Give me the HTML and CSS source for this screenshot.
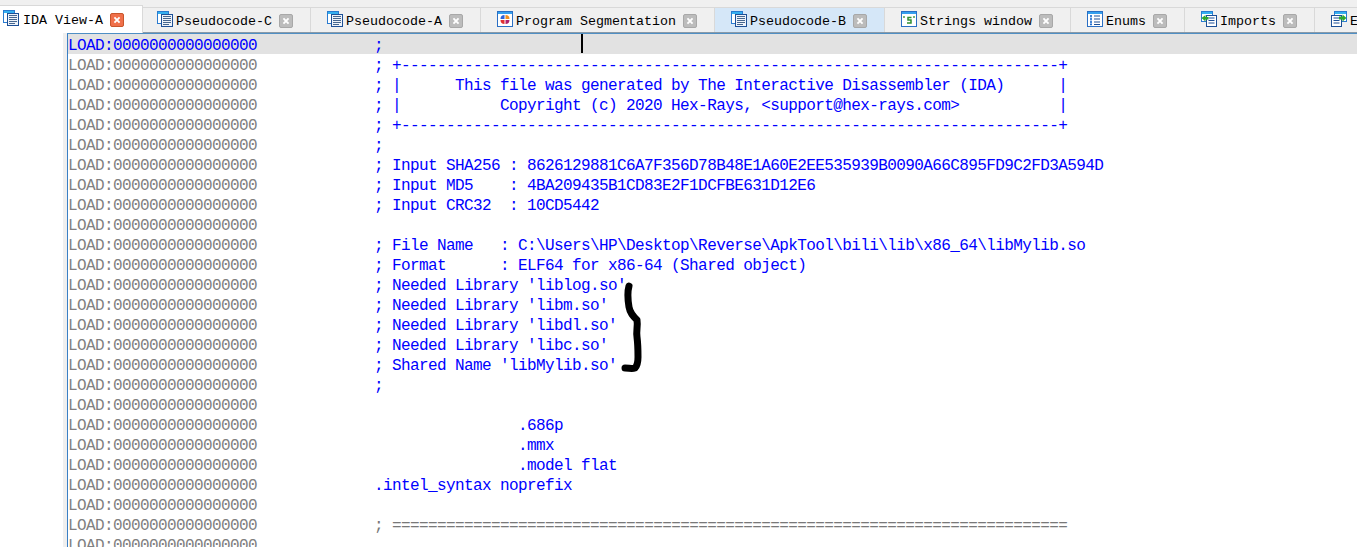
FILE: index.html
```html
<!DOCTYPE html>
<html lang="en">
<head>
<meta charset="utf-8">
<title>IDA View-A</title>
<link rel="stylesheet" href="styles.css">
</head>
<body>
<svg class="defs" width="0" height="0" aria-hidden="true">
  <symbol id="i-doc" viewBox="0 0 16 16">
    <rect x="0.500" y="0.500" width="11" height="12" fill="#fff" stroke="#2a7bd0"/>
    <rect x="1" y="1" width="10" height="2" fill="#35b0f0"/>
    <rect x="4.500" y="3.500" width="11" height="12" fill="#eef3fa" stroke="#1c4f96"/>
    <path d="M6 5.500h8M6 7.500h8M6 9.500h8M6 11.500h8M6 13.500h6" stroke="#46668e" stroke-width="1" fill="none"/>
  </symbol>
  <symbol id="i-seg" viewBox="0 0 16 16">
    <rect x="0.500" y="0.500" width="15" height="15" fill="#fff" stroke="#2a6fc4"/>
    <rect x="1" y="1" width="14" height="2" fill="#35a0ee"/>
    <path d="M7.500 8V4a4 4 0 0 0-4 4z" fill="#2f62d8"/>
    <path d="M8.500 8V4a4 4 0 0 1 4 4z" fill="#f09020"/>
    <path d="M7.500 9v4a4 4 0 0 1-4-4z" fill="#e03030"/>
    <path d="M8.500 9v4a4 4 0 0 0 4-4z" fill="#b0206a"/>
  </symbol>
  <symbol id="i-str" viewBox="0 0 16 16">
    <rect x="0.500" y="0.500" width="15" height="15" fill="#fff" stroke="#2a6fc4"/>
    <rect x="1" y="1" width="14" height="2" fill="#35a0ee"/>
    <path d="M10.500 6.500H7v2.500h3v3H6" fill="none" stroke="#2f8f2f" stroke-width="1.500"/>
    <path d="M3 5v2M13 5v2" stroke="#2f8f2f" stroke-width="1.300"/>
  </symbol>
  <symbol id="i-enum" viewBox="0 0 16 16">
    <rect x="0.500" y="0.500" width="15" height="15" fill="#fff" stroke="#2a6fc4"/>
    <rect x="1" y="1" width="14" height="2" fill="#35a0ee"/>
    <path d="M3 5h2M3 8h2M3 11h2M3 13.500h2" stroke="#1f6fd0" stroke-width="1.500"/>
    <path d="M4 4v10" stroke="#1f6fd0" stroke-width=".7"/>
    <path d="M7 5h6M7 8h6M7 11h6M7 13.500h6" stroke="#1c4f96"/>
  </symbol>
  <symbol id="i-imp" viewBox="0 0 16 16">
    <rect x="0.500" y="0.500" width="11" height="10" fill="#fff" stroke="#2a7bd0"/>
    <rect x="1" y="1" width="10" height="2" fill="#35b0f0"/>
    <rect x="5.500" y="4.500" width="10" height="11" fill="#fff" stroke="#1c4f96"/>
    <path d="M7.500 7h6M7.500 9.500h6M7.500 12h6" stroke="#1c4f96"/>
    <path d="M0.500 7l4-3v2h3v2.500h-3v2z" fill="#2fa82f"/>
  </symbol>
  <symbol id="i-exp" viewBox="0 0 16 16">
    <rect x="3.500" y="0.500" width="12" height="10" fill="#fff" stroke="#2a7bd0"/>
    <rect x="4" y="1" width="11" height="2" fill="#35b0f0"/>
    <rect x="0.500" y="4.500" width="10" height="11" fill="#fff" stroke="#1c4f96"/>
    <path d="M2.500 7h6M2.500 9.500h6M2.500 12h6" stroke="#1c4f96"/>
    <path d="M15.500 7l-4-3.500v2H8v3h3.500v2z" fill="#2fa82f"/>
  </symbol>
  <symbol id="i-x" viewBox="0 0 14 14">
    <path d="M4 4l6 6M10 4l-6 6" stroke="#fff" stroke-width="2.200"/>
  </symbol>
</svg>

<nav class="tabbar">
  <div class="tab active"><svg class="icon"><use href="#i-doc"/></svg><span class="label">IDA View-A</span><span class="close"><svg><use href="#i-x"/></svg></span></div>
  <div class="tab after-active"><svg class="icon"><use href="#i-doc"/></svg><span class="label">Pseudocode-C</span><span class="close"><svg><use href="#i-x"/></svg></span></div>
  <div class="tab"><svg class="icon"><use href="#i-doc"/></svg><span class="label">Pseudocode-A</span><span class="close"><svg><use href="#i-x"/></svg></span></div>
  <div class="tab"><svg class="icon"><use href="#i-seg"/></svg><span class="label">Program Segmentation</span><span class="close"><svg><use href="#i-x"/></svg></span></div>
  <div class="tab hover"><svg class="icon"><use href="#i-doc"/></svg><span class="label">Pseudocode-B</span><span class="close"><svg><use href="#i-x"/></svg></span></div>
  <div class="tab"><svg class="icon"><use href="#i-str"/></svg><span class="label">Strings window</span><span class="close"><svg><use href="#i-x"/></svg></span></div>
  <div class="tab"><svg class="icon"><use href="#i-enum"/></svg><span class="label">Enums</span><span class="close"><svg><use href="#i-x"/></svg></span></div>
  <div class="tab"><svg class="icon"><use href="#i-imp"/></svg><span class="label">Imports</span><span class="close"><svg><use href="#i-x"/></svg></span></div>
  <div class="tab"><svg class="icon"><use href="#i-exp"/></svg><span class="label">Exports</span><span class="close"><svg><use href="#i-x"/></svg></span></div>
</nav>

<main class="workspace">
  <div class="gutter"></div>
  <div class="listing">
    <div class="line current"><span class="addr">LOAD:0000000000000000</span>             ;</div>
    <div class="line"><span class="addr">LOAD:0000000000000000</span>             ; +-------------------------------------------------------------------------+</div>
    <div class="line"><span class="addr">LOAD:0000000000000000</span>             ; |      This file was generated by The Interactive Disassembler (IDA)      |</div>
    <div class="line"><span class="addr">LOAD:0000000000000000</span>             ; |           Copyright (c) 2020 Hex-Rays, &lt;support@hex-rays.com&gt;           |</div>
    <div class="line"><span class="addr">LOAD:0000000000000000</span>             ; +-------------------------------------------------------------------------+</div>
    <div class="line"><span class="addr">LOAD:0000000000000000</span>             ;</div>
    <div class="line"><span class="addr">LOAD:0000000000000000</span>             ; Input SHA256 : 8626129881C6A7F356D78B48E1A60E2EE535939B0090A66C895FD9C2FD3A594D</div>
    <div class="line"><span class="addr">LOAD:0000000000000000</span>             ; Input MD5    : 4BA209435B1CD83E2F1DCFBE631D12E6</div>
    <div class="line"><span class="addr">LOAD:0000000000000000</span>             ; Input CRC32  : 10CD5442</div>
    <div class="line"><span class="addr">LOAD:0000000000000000</span></div>
    <div class="line"><span class="addr">LOAD:0000000000000000</span>             ; File Name   : C:\Users\HP\Desktop\Reverse\ApkTool\bili\lib\x86_64\libMylib.so</div>
    <div class="line"><span class="addr">LOAD:0000000000000000</span>             ; Format      : ELF64 for x86-64 (Shared object)</div>
    <div class="line"><span class="addr">LOAD:0000000000000000</span>             ; Needed Library 'liblog.so'</div>
    <div class="line"><span class="addr">LOAD:0000000000000000</span>             ; Needed Library 'libm.so'</div>
    <div class="line"><span class="addr">LOAD:0000000000000000</span>             ; Needed Library 'libdl.so'</div>
    <div class="line"><span class="addr">LOAD:0000000000000000</span>             ; Needed Library 'libc.so'</div>
    <div class="line"><span class="addr">LOAD:0000000000000000</span>             ; Shared Name 'libMylib.so'</div>
    <div class="line"><span class="addr">LOAD:0000000000000000</span>             ;</div>
    <div class="line"><span class="addr">LOAD:0000000000000000</span></div>
    <div class="line"><span class="addr">LOAD:0000000000000000</span>                             .686p</div>
    <div class="line"><span class="addr">LOAD:0000000000000000</span>                             .mmx</div>
    <div class="line"><span class="addr">LOAD:0000000000000000</span>                             .model flat</div>
    <div class="line"><span class="addr">LOAD:0000000000000000</span>             .intel_syntax noprefix</div>
    <div class="line"><span class="addr">LOAD:0000000000000000</span></div>
    <div class="line"><span class="addr">LOAD:0000000000000000</span>             <span class="rule">; ===========================================================================</span></div>
    <div class="line"><span class="addr">LOAD:0000000000000000</span></div>
    <span class="caret"></span>
  </div>
  <svg class="scribble" viewBox="0 0 24 90" aria-hidden="true">
    <path d="M9 3C7 10 8 18 9 24C10 30 13 33 17 37C18 43 16 48 17 54C18 62 18 68 18 74C18 80 17 83 15 85C12 86 9 85 5 85"/>
  </svg>
</main>
</body>
</html>
```
FILE: styles.css
```css
* { box-sizing: border-box; }
html, body { margin: 0; height: 547px; overflow: hidden; background: #fff; }
body { display: flex; flex-direction: column; }
.defs { position: absolute; }

.tabbar {
  display: flex;
  align-items: flex-end;
  height: 33px;
  flex: none;
  background: #f0f0f0;
  overflow: hidden;
  position: relative;
  font: 13.33px/16px "Liberation Mono", monospace;
  color: #000;
}
.tabbar::after {
  content: "";
  position: absolute;
  left: 0; right: 0; bottom: 0;
  height: 1px;
  background: #8a9aa8;
}
.tab {
  flex: none;
  display: flex;
  align-items: center;
  height: 26px;
  padding: 0 17px 0 16px;
  border-top: 1px solid #d9d9d9;
  border-right: 1px solid #d9d9d9;
  background: #f0f0f0;
}
.tab.active {
  height: 28px;
  padding: 0 18px 0 3px;
  background: #fff;
  position: relative;
  z-index: 1;
}
.tab.after-active { margin-left: -2px; }
.tab.hover { background: #d5e7f8; }
.icon { width: 16px; height: 16px; flex: none; margin: -3px 3px 0 0; }
.active .icon { margin-right: 4px; margin-top: -4px; }
.label { white-space: pre; padding-top: 2px; }
.close {
  width: 14px;
  height: 14px;
  margin-left: 7px;
  flex: none;
  border-radius: 2px;
  background: #bcbcbc;
  border: 1px solid #a8a8a8;
  display: block;
}
.close svg { display: block; width: 12px; height: 12px; }
.active .close { background: #f0704a; border-color: #c8562c; }

.workspace { flex: 1; display: flex; min-height: 0; position: relative; }
.gutter {
  width: 68px;
  flex: none;
  background: linear-gradient(90deg, #fff 63px, #efefef 63px);
}
.listing {
  flex: 1;
  margin-left: -1px;
  border-left: 1px solid #3a7fc4;
  border-top: 1px solid #4f8fc4;
  overflow: hidden;
  position: relative;
  font: 16px/24px "Liberation Mono", monospace;
  letter-spacing: -0.6px;
  color: #0000ff;
}
.line { height: 20px; white-space: pre; }
.line.current { background: #e2e2e2; }
.addr { color: #808080; }
.current .addr { color: #0000ff; }
.rule { color: #787878; }
.caret {
  position: absolute;
  left: 513px;
  top: 0;
  width: 2px;
  height: 19px;
  background: #000;
}
.scribble {
  position: absolute;
  left: 620px;
  top: 250px;
  width: 24px;
  height: 90px;
  overflow: visible;
}
.scribble path {
  fill: none;
  stroke: #000;
  stroke-width: 7;
  stroke-linecap: round;
  stroke-linejoin: round;
}
```
